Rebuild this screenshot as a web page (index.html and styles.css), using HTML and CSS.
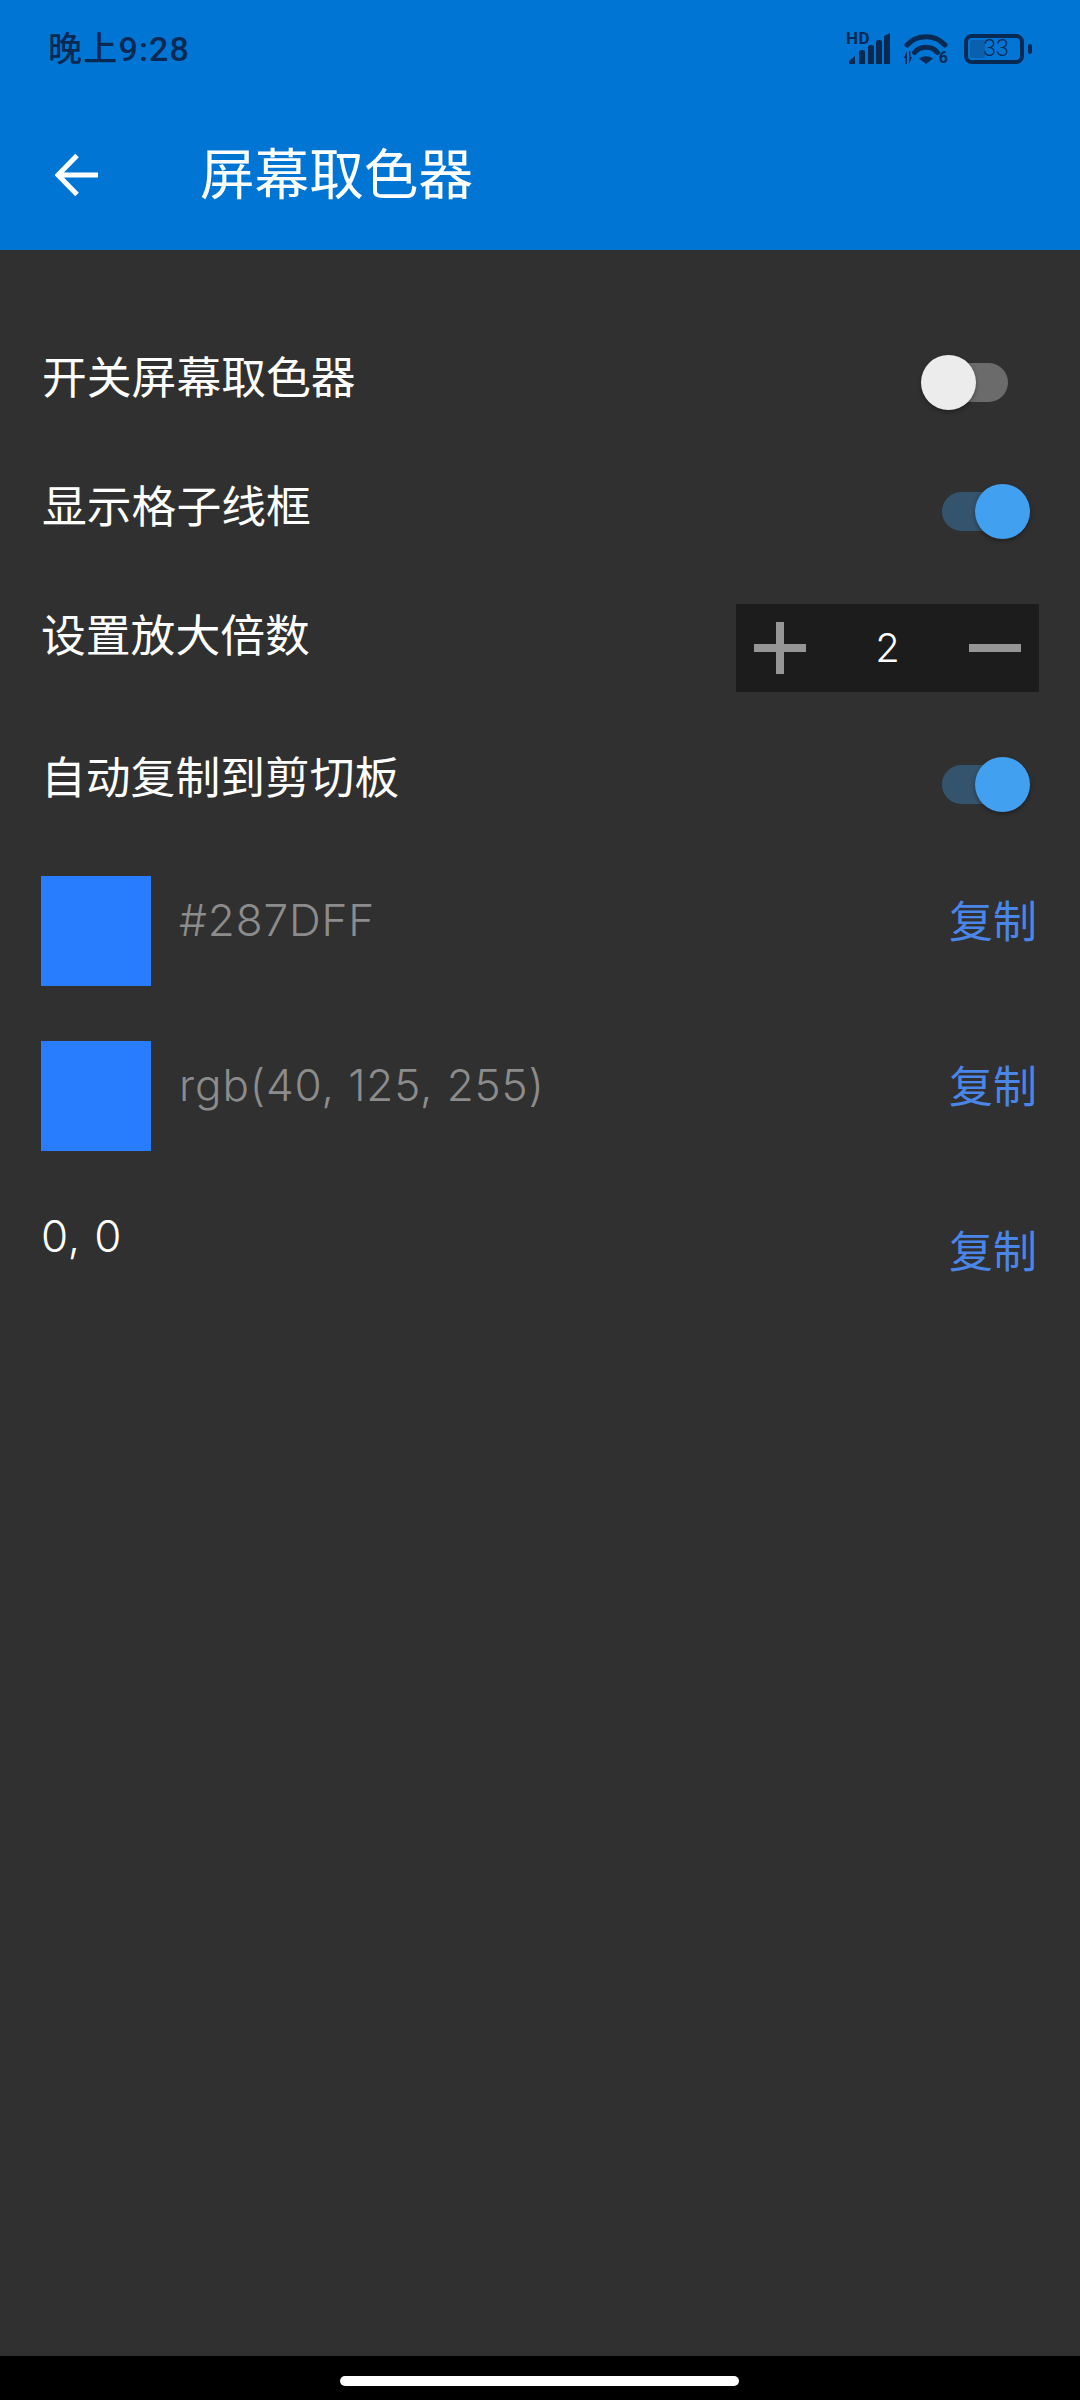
FILE: index.html
```html
<!DOCTYPE html>
<html lang="zh">
<head>
<meta charset="utf-8">
<title>屏幕取色器</title>
<link rel="stylesheet" href="styles.css">
</head>
<body>
<div class="app">
  <header class="header">
    <div class="statusbar">
      <span class="clock">晚上9:28</span>
      <div class="status-icons">
        <div class="signal">
          <span class="hd">HD</span>
          <svg class="signal-bars" width="42" height="31" viewBox="0 0 42 31"><path d="M1 31v-3l6-5v8zM11 31v-12q0-2 2.500-2h1q2.500 0 2.500 2v12zM20 31v-17q0-2 2.500-2h1q2.500 0 2.500 2v17zM28 31v-22q0-2 2.500-2h1q2.500 0 2.500 2v22zM36 31v-28l6-3v31z"/></svg>
        </div>
        <div class="wifi">
          <svg width="44" height="30" viewBox="0 0 44 30"><path class="arc" d="M3 11C13 0 31 0 41 11"/><path class="arc" d="M10.500 18.500C16 11.500 28 11.500 33.500 18.500"/><path class="dot" d="M15 24.500Q22 20 29 24.500L22 30z"/><path class="dot" d="M0 24l3-7 0 13h-1.500v-6zM5 17h1.500v6h1.500l-3 7z"/></svg>
          <span class="wifi-gen">6</span>
        </div>
        <div class="battery">
          <div class="battery-body"><span class="battery-level"></span><span class="battery-text">33</span></div>
          <span class="battery-nub"></span>
        </div>
      </div>
    </div>
    <div class="toolbar">
      <svg class="back" width="44" height="44" viewBox="0 0 44 44"><path d="M43 22H4M22 2.500L3 22l19 19.500"/></svg>
      <h1 class="title">屏幕取色器</h1>
    </div>
  </header>

  <main class="content">
    <div class="row row-first">
      <span class="label">开关屏幕取色器</span>
      <div class="switch"><span class="track"></span><span class="thumb"></span></div>
    </div>
    <div class="row row-second">
      <span class="label">显示格子线框</span>
      <div class="switch switch-on"><span class="track"></span><span class="thumb"></span></div>
    </div>
    <div class="row row-stepper">
      <span class="label label-stepper">设置放大倍数</span>
      <div class="stepper">
        <svg width="52" height="52" viewBox="0 0 52 52"><path d="M0 26H52M26 0V52"/></svg>
        <span class="stepper-value">2</span>
        <svg width="52" height="52" viewBox="0 0 52 52"><path d="M0 26H52"/></svg>
      </div>
    </div>
    <div class="row row-auto">
      <span class="label label-auto">自动复制到剪切板</span>
      <div class="switch switch-on"><span class="track"></span><span class="thumb"></span></div>
    </div>
    <div class="row row-color">
      <span class="swatch"></span>
      <span class="value">#287DFF</span>
      <span class="copy">复制</span>
    </div>
    <div class="row row-color">
      <span class="swatch"></span>
      <span class="value">rgb(40, 125, 255)</span>
      <span class="copy">复制</span>
    </div>
    <div class="row row-coord">
      <span class="coord">0, 0</span>
      <span class="copy">复制</span>
    </div>
  </main>

  <footer class="navbar"><span class="pill"></span></footer>
</div>
</body>
</html>
```
FILE: styles.css
```css
* { box-sizing: border-box; }
html, body { margin: 0; padding: 0; }
body {
  width: 1080px;
  height: 2400px;
  overflow: hidden;
  background: #303030;
  font-family: Roboto, "Noto Sans CJK SC", sans-serif;
}
.app { display: flex; flex-direction: column; height: 2400px; }

.header { height: 250px; background: #0175d3; flex: none; }
.statusbar {
  height: 100px;
  padding: 0 48px 3px 48px;
  display: flex;
  align-items: center;
  justify-content: space-between;
  color: #082a52;
}
.clock { font-size: 34px; font-weight: 500; line-height: 40px; letter-spacing: 1.2px; }
.status-icons { display: flex; align-items: flex-end; gap: 14px; }
.signal { position: relative; width: 44px; height: 31px; }
.signal-bars { display: block; margin-left: 2px; fill: #082a52; }
.hd {
  position: absolute;
  left: 0;
  top: -2px;
  font-size: 17px;
  line-height: 14px;
  font-weight: 700;
  letter-spacing: 0.5px;
}
.wifi { position: relative; width: 44px; height: 30px; }
.wifi svg { display: block; }
.arc { fill: none; stroke: #082a52; stroke-width: 5; stroke-linecap: round; }
.dot { fill: #082a52; }
.wifi-gen {
  position: absolute;
  right: 0;
  bottom: -1px;
  font-size: 16px;
  line-height: 15px;
  font-weight: 700;
}
.battery { display: flex; align-items: center; gap: 4px; margin-left: 2px; }
.battery-body {
  position: relative;
  width: 60px;
  height: 30px;
  border: 4px solid #082a52;
  border-radius: 8px;
  display: flex;
  align-items: center;
  justify-content: center;
}
.battery-level {
  position: absolute;
  left: 2px;
  top: 2px;
  bottom: 2px;
  width: 15px;
  background: #0a5fae;
  border-radius: 2px;
}
.battery-text { position: relative; font-size: 23px; line-height: 22px; font-weight: 300; margin-left: 4px; }
.battery-nub { width: 4px; height: 10px; border-radius: 2px; background: #082a52; }

.toolbar { height: 150px; display: flex; align-items: center; padding: 0 0 0 55px; }
.back { fill: none; stroke: #fff; stroke-width: 5; flex: none; }
.title {
  margin: 0 0 0 101px;
  color: #fff;
  font-size: 54.600px;
  line-height: 70px;
  font-weight: 400;
}

.content { flex: 1; display: flex; flex-direction: column; padding: 105px 41px 0; }
.row { display: flex; align-items: flex-start; justify-content: space-between; }
.row-first { height: 55px; margin-bottom: 74px; }
.row-second { height: 55px; margin-bottom: 65px; }
.row-stepper { height: 88px; margin-bottom: 65px; }
.row-auto { height: 55px; margin-bottom: 64px; }
.row-color { height: 110px; margin-bottom: 55px; }
.row-coord { height: 90px; }

.label { color: #fff; font-size: 44.800px; line-height: 46px; margin: 1px 0 0 1px; }
.label-stepper { margin-top: 10px; margin-left: 0; }
.label-auto { margin-top: -1px; margin-left: 0; }

.switch { position: relative; width: 109px; height: 55px; margin-right: 9px; }
.track {
  position: absolute;
  left: 21px;
  right: 22px;
  top: 8px;
  height: 39px;
  border-radius: 20px;
  background: #6b6b6b;
}
.thumb {
  position: absolute;
  left: 0;
  top: 0;
  width: 55px;
  height: 55px;
  border-radius: 50%;
  background: #ececec;
  box-shadow: 0 2px 4px rgba(0, 0, 0, 0.35);
}
.switch-on .track { background: #34536c; }
.switch-on .thumb { left: auto; right: 0; background: #42a0f0; }

.stepper {
  width: 303px;
  height: 88px;
  padding: 0 18px;
  background: #1c1c1c;
  display: flex;
  align-items: center;
  justify-content: space-between;
}
.stepper svg { fill: none; stroke: #969696; stroke-width: 8; display: block; }
.stepper-value { color: #fff; font-family: Inter, sans-serif; font-size: 40px; line-height: 46px; font-weight: 300; }

.swatch { width: 110px; height: 110px; background: #287dff; flex: none; }
.value {
  flex: 1;
  margin: 19px 0 0 28px;
  color: #8c8c8c;
  font-family: Inter, sans-serif;
  font-size: 44px;
  line-height: 50px;
  font-weight: 300;
  letter-spacing: 0.9px;
}
.copy {
  color: #4a86e8;
  font-size: 44px;
  line-height: 50px;
  margin: 22px 2px 0 0;
  flex: none;
}
.coord { color: #fff; font-family: Inter, sans-serif; font-size: 44px; line-height: 50px; margin-top: 5px; font-weight: 300; letter-spacing: 0.8px; }

.navbar {
  height: 44px;
  background: #000;
  flex: none;
  display: flex;
  justify-content: center;
  padding-top: 20px;
}
.pill { width: 399px; height: 10px; border-radius: 5px; background: #fff; margin-left: -1px; }
```
